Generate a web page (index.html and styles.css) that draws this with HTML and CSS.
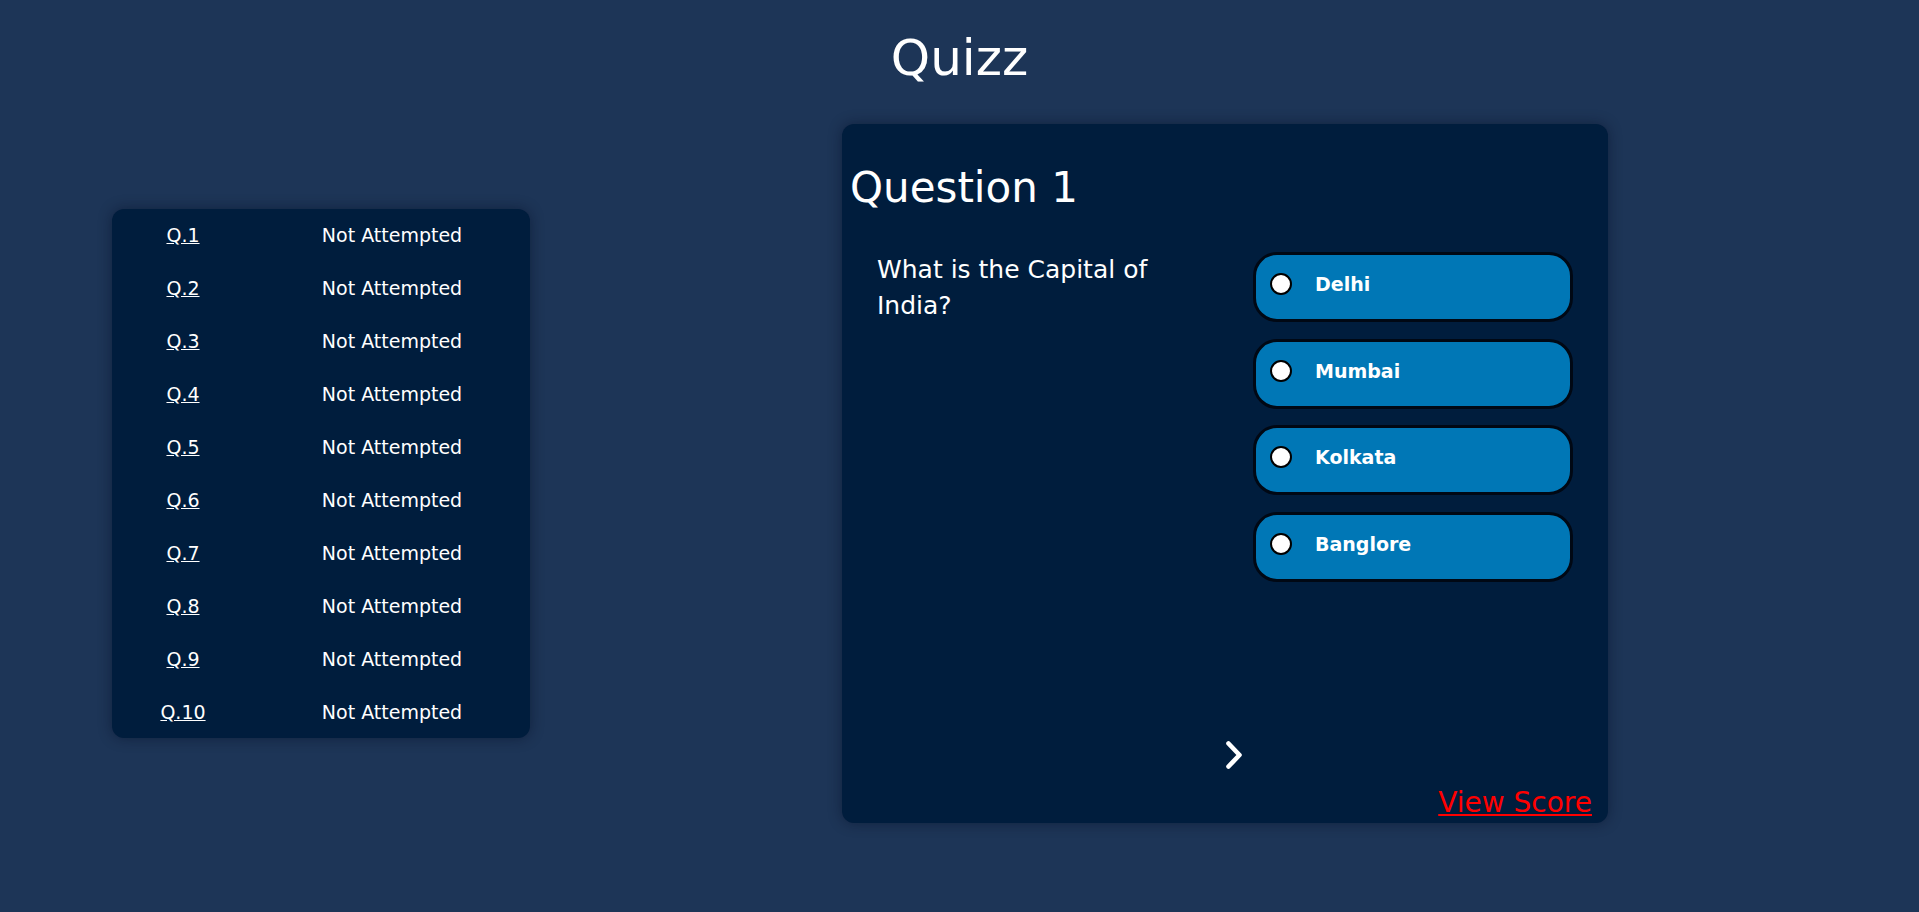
FILE: index.html
```html
<!DOCTYPE html>
<html lang="en">
<head>
<meta charset="utf-8">
<title>Quizz</title>
<link rel="stylesheet" href="styles.css">
</head>
<body>
<h1 class="title">Quizz</h1>
<main class="main">
  <section class="status-panel">
    <div class="status-row"><a href="#" class="q-link">Q.1</a><span>Not Attempted</span></div>
    <div class="status-row"><a href="#" class="q-link">Q.2</a><span>Not Attempted</span></div>
    <div class="status-row"><a href="#" class="q-link">Q.3</a><span>Not Attempted</span></div>
    <div class="status-row"><a href="#" class="q-link">Q.4</a><span>Not Attempted</span></div>
    <div class="status-row"><a href="#" class="q-link">Q.5</a><span>Not Attempted</span></div>
    <div class="status-row"><a href="#" class="q-link">Q.6</a><span>Not Attempted</span></div>
    <div class="status-row"><a href="#" class="q-link">Q.7</a><span>Not Attempted</span></div>
    <div class="status-row"><a href="#" class="q-link">Q.8</a><span>Not Attempted</span></div>
    <div class="status-row"><a href="#" class="q-link">Q.9</a><span>Not Attempted</span></div>
    <div class="status-row"><a href="#" class="q-link">Q.10</a><span>Not Attempted</span></div>
  </section>
  <section class="card">
    <h2 class="q-title">Question 1</h2>
    <div class="q-body">
      <p class="q-text">What is the Capital of India?</p>
      <div class="options">
        <label class="option"><span class="radio"></span><span class="opt-text">Delhi</span></label>
        <label class="option"><span class="radio"></span><span class="opt-text">Mumbai</span></label>
        <label class="option"><span class="radio"></span><span class="opt-text">Kolkata</span></label>
        <label class="option"><span class="radio"></span><span class="opt-text">Banglore</span></label>
      </div>
    </div>
    <div class="nav">
      <svg class="chev" width="18" height="30" viewBox="0 0 18 30"><polyline points="3.5,3.5 14.5,15 3.5,26.5" fill="none" stroke="#ffffff" stroke-width="4.6" stroke-linecap="round" stroke-linejoin="round"/></svg>
    </div>
    <div class="score-row"><a href="#" class="score-link">View Score</a></div>
  </section>
</main>
</body>
</html>
```
FILE: styles.css
```css
* { box-sizing: border-box; }
html, body { margin: 0; padding: 0; }
body {
  background: #1d3557;
  color: #ffffff;
  font-family: "DejaVu Sans", Verdana, sans-serif;
  min-height: 912px;
}
.title {
  font-size: 50px;
  font-weight: normal;
  text-align: center;
  margin: 29px 0 37px;
  line-height: normal;
}
.main {
  display: flex;
  align-items: center;
  padding-left: 112px;
  gap: 312px;
}
.status-panel {
  width: 418px;
  background: #001d3d;
  border-radius: 12px;
  box-shadow: 0 0 14px rgba(0, 10, 30, 0.45);
  display: flex;
  flex-direction: column;
}
.status-row {
  display: grid;
  grid-template-columns: 142px 1fr;
  align-items: center;
  height: 52.9px;
  text-align: center;
  font-size: 19px;
}
.q-link { color: #ffffff; text-decoration: underline; }
.card {
  width: 766px;
  height: 699px;
  background: #001d3d;
  border-radius: 12px;
  box-shadow: 0 0 14px rgba(0, 10, 30, 0.45);
  display: flex;
  flex-direction: column;
  padding: 39px 16px 4px 8px;
}
.q-title {
  font-size: 42px;
  font-weight: normal;
  margin: 0 0 40px;
  line-height: normal;
}
.q-body {
  display: grid;
  grid-template-columns: 1fr 1fr;
  padding-left: 27px;
  padding-right: 19px;
}
.q-text {
  margin: 0;
  font-size: 25px;
  line-height: 36px;
}
.options {
  justify-self: end;
  width: 320px;
  display: flex;
  flex-direction: column;
  gap: 16.5px;
}
.option {
  height: 70px;
  background: #0077b6;
  border: 3px solid #000814;
  border-radius: 24px;
  display: flex;
  align-items: center;
  padding: 0 0 6px 14px;
  font-size: 19px;
  font-weight: bold;
}
.radio {
  width: 22px;
  height: 22px;
  border-radius: 50%;
  background: #ffffff;
  border: 2px solid #000000;
  margin-right: 23px;
  flex: none;
}
.nav {
  margin-top: auto;
  margin-bottom: 16px;
  display: flex;
  justify-content: center;
  padding-left: 26px;
}
.chev { display: block; }
.score-row {
  text-align: right;
  font-size: 28px;
  line-height: normal;
}
.score-link { color: #ff0000; text-decoration: underline; }
```
